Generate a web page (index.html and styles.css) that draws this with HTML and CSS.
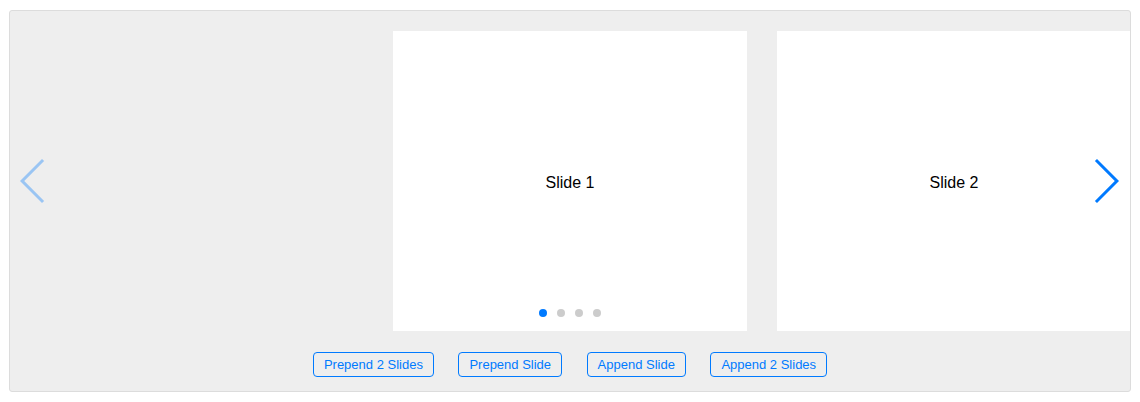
FILE: index.html
```html
<!DOCTYPE html>
<html>
<head>
<meta charset="utf-8">
<link rel="stylesheet" href="styles.css">
</head>
<body>
<div class="demo">
  <div class="swiper">
    <div class="track">
      <div class="slide">Slide 1</div>
      <div class="slide">Slide 2</div>
    </div>
    <div class="pagination">
      <span class="bullet active"></span>
      <span class="bullet"></span>
      <span class="bullet"></span>
      <span class="bullet"></span>
    </div>
    <svg class="nav prev" width="27" height="44" viewBox="0 0 27 44"><path d="M0,22L22,0l2.1,2.1L4.2,22l19.9,19.9L22,44L0,22z"/></svg>
    <svg class="nav next" width="27" height="44" viewBox="0 0 27 44"><path d="M27,22L5,44l-2.1-2.1L22.8,22L2.9,2.1L5,0L27,22z"/></svg>
  </div>
  <div class="buttons">
    <button class="btn">Prepend 2 Slides</button>
    <button class="btn">Prepend Slide</button>
    <button class="btn">Append Slide</button>
    <button class="btn">Append 2 Slides</button>
  </div>
</div>
</body>
</html>
```
FILE: styles.css
```css
html, body {
  margin: 0;
  padding: 0;
  background: #fff;
  font-family: "Liberation Sans", Arial, sans-serif;
}
.demo {
  box-sizing: border-box;
  width: 1122px;
  height: 382px;
  margin: 10px 0 0 9px;
  border: 1px solid #dcdcdc;
  border-radius: 3px;
  background: #eee;
  padding-top: 20px;
}
.swiper {
  position: relative;
  overflow: hidden;
  height: 300px;
}
.track {
  display: flex;
  gap: 30px;
  padding-left: 383px;
  height: 100%;
}
.slide {
  box-sizing: border-box;
  flex: 0 0 354px;
  background: #fff;
  display: flex;
  align-items: center;
  justify-content: center;
  padding-top: 3px;
  font-size: 16px;
  color: #000;
}
.pagination {
  position: absolute;
  left: 0;
  right: 0;
  bottom: 14px;
  display: flex;
  justify-content: center;
  gap: 10px;
}
.bullet {
  width: 8px;
  height: 8px;
  border-radius: 50%;
  background: #ccc;
}
.bullet.active {
  background: #007aff;
}
.nav {
  position: absolute;
  top: 50%;
  margin-top: -22px;
  fill: #007aff;
}
.prev {
  left: 10px;
  opacity: 0.35;
}
.next {
  right: 11px;
}
.buttons {
  display: flex;
  justify-content: center;
  gap: 24.5px;
  margin-top: 21px;
}
.btn {
  box-sizing: border-box;
  height: 25px;
  padding: 1px 10px 0;
  border: 1px solid #007aff;
  border-radius: 4px;
  background: transparent;
  color: #007aff;
  font-family: "Liberation Sans", Arial, sans-serif;
  font-size: 13px;
  line-height: 22px;
  margin: 0;
}
```
